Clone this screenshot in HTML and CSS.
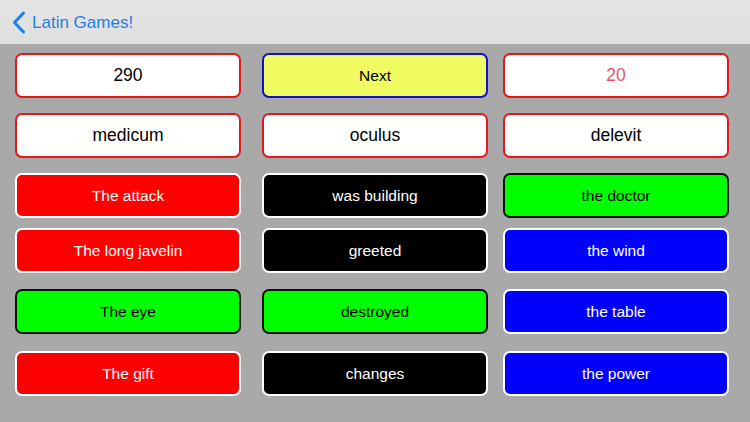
FILE: index.html
```html
<!DOCTYPE html>
<html>
<head>
<meta charset="utf-8">
<link rel="stylesheet" href="styles.css">
</head>
<body>
<header class="nav">
  <svg class="chev" width="14" height="24" viewBox="0 0 14 24"><polyline points="11.5,2 2.5,11.5 11.5,21" fill="none" stroke="#1b7fe8" stroke-width="3" stroke-linecap="round" stroke-linejoin="round"/></svg>
  <span class="title">Latin Games!</span>
</header>
<main class="board">
  <div class="row r1">
    <div class="tile white">290</div>
    <div class="tile yellow c2">Next</div>
    <div class="tile white pink c3">20</div>
  </div>
  <div class="row r2">
    <div class="tile white">medicum</div>
    <div class="tile white c2">oculus</div>
    <div class="tile white c3">delevit</div>
  </div>
  <div class="row r3">
    <div class="tile red">The attack</div>
    <div class="tile black c2">was building</div>
    <div class="tile green c3">the doctor</div>
  </div>
  <div class="row r4">
    <div class="tile red">The long javelin</div>
    <div class="tile black c2">greeted</div>
    <div class="tile blue c3">the wind</div>
  </div>
  <div class="row r5">
    <div class="tile green">The eye</div>
    <div class="tile green c2">destroyed</div>
    <div class="tile blue c3">the table</div>
  </div>
  <div class="row r6">
    <div class="tile red">The gift</div>
    <div class="tile black c2">changes</div>
    <div class="tile blue c3">the power</div>
  </div>
</main>
</body>
</html>
```
FILE: styles.css
```css
html, body {
  margin: 0;
  padding: 0;
}
body {
  width: 750px;
  height: 422px;
  background: #a9a9a9;
  font-family: "Liberation Sans", Arial, sans-serif;
  overflow: hidden;
}
.nav {
  height: 44px;
  box-sizing: border-box;
  background: linear-gradient(#e6e5e6, #e0dfe0);
  display: flex;
  align-items: center;
  padding-left: 12px;
}
.chev {
  display: block;
  margin-top: 1px;
}
.title {
  color: #1b7fe8;
  font-size: 17px;
  margin-left: 6px;
  margin-top: 1px;
}
.board {
  padding: 9px 0 0 15px;
}
.row {
  display: flex;
}
.r2, .r3 { margin-top: 15px; }
.r4 { margin-top: 10px; }
.r5 { margin-top: 16px; }
.r6 { margin-top: 17px; }
.tile {
  width: 226px;
  height: 45px;
  box-sizing: border-box;
  border: 2px solid #fff;
  border-radius: 7px;
  display: flex;
  align-items: center;
  justify-content: center;
  font-size: 15.5px;
}
.c2 { margin-left: 21px; }
.c3 { margin-left: 15px; }
.white {
  background: #fff;
  border-color: #e11a1a;
  color: #000;
  font-size: 17.5px;
}
.pink { color: #e9506a; }
.yellow {
  background: #f0fc62;
  border-color: #1010c8;
  color: #000;
}
.red {
  background: #ff0000;
  color: #fff;
}
.black {
  background: #000;
  color: #fff;
}
.green {
  background: #00ff00;
  border-color: #111;
  color: #000;
}
.blue {
  background: #0000ff;
  color: #fff;
}
```
